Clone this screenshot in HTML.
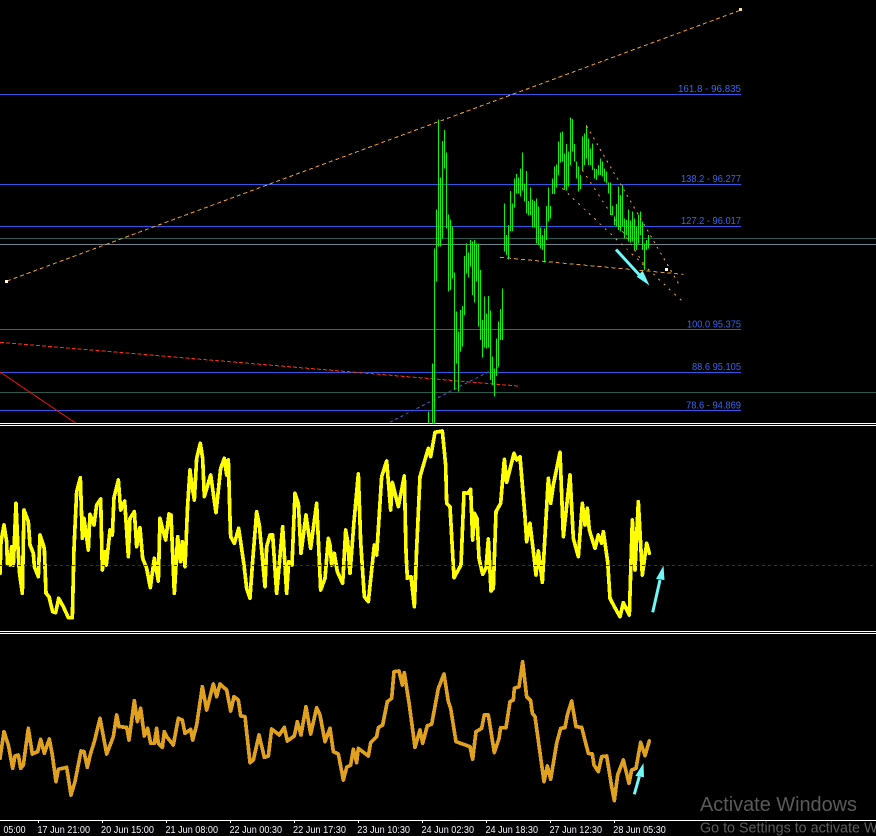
<!DOCTYPE html>
<html><head><meta charset="utf-8"><style>
html,body{margin:0;padding:0;background:#000;width:876px;height:836px;overflow:hidden}
svg{display:block}
text{font-family:"Liberation Sans",sans-serif}
</style></head><body>
<svg width="876" height="836" viewBox="0 0 876 836" xmlns="http://www.w3.org/2000/svg">
<rect width="876" height="836" fill="#000"/>
<defs><clipPath id="m"><rect x="0" y="0" width="876" height="423"/></clipPath></defs>
<g clip-path="url(#m)">
<g shape-rendering="crispEdges" fill="#3058e8">
<rect x="0" y="94" width="741" height="1"/><rect x="0" y="184" width="741" height="1"/><rect x="0" y="226" width="741" height="1"/><rect x="0" y="329" width="741" height="1"/><rect x="0" y="372" width="741" height="1"/><rect x="0" y="410" width="741" height="1"/>
<rect x="0" y="238" width="876" height="1" fill="#2a5a58"/><rect x="0" y="244" width="876" height="1" fill="#74848c"/><rect x="0" y="392" width="876" height="1" fill="#2a5a50"/>
</g>
<g fill="none" stroke-width="1" shape-rendering="crispEdges">
<path d="M7 281L741 10" stroke="#f0a020" stroke-dasharray="4 3"/>
<path d="M0 342.4L518 386" stroke="#ff3300" stroke-dasharray="4 2"/>
<path d="M0 372L77 424" stroke="#f01010"/>
<path d="M384.6 425L499 366.5" stroke="#4060d0" stroke-dasharray="3 3"/>
</g>
<path fill="none" stroke="#00f800" stroke-width="3" shape-rendering="crispEdges" transform="translate(420.17,100) scale(.33333)" d="M25 935V970M37 790V970M43 445V970M49 328V545M55 58V440M61 232V440M67 123V415M73 90V205M79 157V385M85 343V575M91 358V570M97 380V535M103 517V870M109 635V790M115 695V875M121 630V755M127 618V740M133 468V645M139 430V520M145 457V533M151 420V500M157 425V585M163 420V608M169 430V545M175 430V680M181 510V720M187 660V773M193 590V743M199 640V745M205 588V743M211 632V840M217 770V855M223 805V890M229 715V828M235 665V800M241 627V720M247 565V720M253 310V455M259 405V465M265 375V478M271 273V393M277 310V393M283 235V323M289 222V280M295 232V280M301 205V290M307 157V272M313 250V305M319 213V340M325 303V347M331 262V345M337 298V383M343 303V383M349 295V430M355 320V435M361 383V445M367 405V450M373 385V487M379 318V420M385 262V365M391 318V355M397 235V282M403 200V282M409 193V262M415 125V225M421 98V187M427 95V185M433 160V270M439 132V272M445 155V260M451 52V195M457 57V155M463 132V185M469 185V235M475 200V275M481 225V267M487 110V210M493 100V195M499 75V175M505 115V195M511 145V195M517 130V210M523 205V235M529 207V240M535 195V225M541 175V225M547 185V230M553 205V245M559 215V250M565 247V280M571 247V345M577 318V345M583 350V375M589 312V380M595 260V390M601 285V395M607 255V380M613 355V415M619 360V405M625 328V425M631 362V428M637 335V425M643 355V450M649 380V450M655 343V430M661 335V405M667 365V450M673 430V510M679 420V450M685 405V445"/>
<g fill="none" stroke="#e8a020" stroke-width="1" shape-rendering="crispEdges" transform="translate(420,100) scale(.33333)">
<path d="M240 472L790 523" stroke-width="3" stroke-dasharray="12 9"/>
<path d="M500 78L775 550" stroke-width="3" stroke-dasharray="6 14"/>
<path d="M427 265L790 607" stroke-width="3" stroke-dasharray="6 16"/>
<path d="M487 210L680 505" stroke-width="3" stroke-dasharray="6 16"/>
</g>
<rect x="665" y="268" width="3" height="3" fill="#fff" shape-rendering="crispEdges"/>
<rect x="5" y="280" width="3" height="3" fill="#fff" shape-rendering="crispEdges"/>
<rect x="739" y="8" width="3" height="3" fill="#f8e0a0" shape-rendering="crispEdges"/>
<path d="M616 249.5L644 280" stroke="#70f8f8" stroke-width="3" fill="none"/>
<path d="M649.5 285.5L636.7 276.7L642.7 270.7Z" fill="#70f8f8"/>
</g>
<g font-size="10.5" fill="#3a66f0">
<text x="678" y="92" textLength="63" lengthAdjust="spacingAndGlyphs">161.8 -  96.835</text>
<text x="681" y="182" textLength="60" lengthAdjust="spacingAndGlyphs">138.2 - 96.277</text>
<text x="681" y="224" textLength="60" lengthAdjust="spacingAndGlyphs">127.2 - 96.017</text>
<text x="687" y="327.5" textLength="54" lengthAdjust="spacingAndGlyphs">100.0 95.375</text>
<text x="692" y="370" textLength="49" lengthAdjust="spacingAndGlyphs">88.6 95.105</text>
<text x="686" y="408.5" textLength="55" lengthAdjust="spacingAndGlyphs">78.6 - 94.869</text>
</g>
<rect x="0" y="423" width="876" height="1" fill="#fff" shape-rendering="crispEdges"/>
<rect x="0" y="425" width="876" height="1" fill="#fff" shape-rendering="crispEdges"/>
<rect x="0" y="631" width="876" height="1" fill="#fff" shape-rendering="crispEdges"/>
<rect x="0" y="633" width="876" height="1" fill="#fff" shape-rendering="crispEdges"/>

<g fill="none" stroke="#ffff00" stroke-width="11" stroke-linejoin="round" stroke-linecap="round" shape-rendering="crispEdges">
<polyline transform="translate(0,425) scale(.33333)" points="0,445 3,350 12,300 20,350 22,415 30,420 35,365 40,420 48,235 53,350 58,440 67,505 72,255 85,290 90,360 100,385 103,425 115,455 120,330 133,370 138,505 147,515 158,560 167,563 176,520 190,545 205,578 217,578 222,370 230,200 241,158 247,340 252,280 265,375 270,268 282,300 290,240 302,222 307,435 314,380 319,420 330,315 337,330 342,218 355,165 362,255 374,228 385,395 390,280 403,260 410,365 420,308 428,400 440,430 451,488 463,400 475,468 480,280 490,320 497,345 507,267 513,270 523,505 533,335 541,410 547,350 555,425 563,240 570,135 575,175 583,225 590,100 601,55 608,100 613,215 632,150 648,263 662,130 673,100 680,150 685,105 690,280 692,335 703,355 716,310 722,350 732,420 740,490 750,520 757,420 770,260 778,300 795,485 800,365 810,330 818,330 830,505 848,305 860,505 866,410 876,420 885,205 895,235 903,385 918,270 932,370 950,235 962,495 975,460 985,340 990,360"/>
<polyline transform="translate(330,425) scale(.33333)" points="0,360 5,420 13,385 22,440 38,475 47,315 53,350 60,445 72,290 85,147 92,350 103,515 115,530 133,360 140,390 155,155 170,108 182,255 187,172 205,245 223,153 228,380 232,460 243,455 253,545 260,370 270,155 295,70 302,95 315,22 337,18 347,120 350,235 360,245 372,458 393,420 402,203 413,205 422,193 428,345 433,265 441,280 447,400 458,448 468,430 475,342 483,498 490,490 498,260 512,235 523,103 530,172 552,85 560,105 570,95 585,275 590,350 600,295 612,395 618,450 625,378 637,472 655,160 662,235 670,180 690,82 700,335 720,150 730,340 745,395 757,235 765,300 772,250 778,315 795,370 805,330 815,355 820,320 833,410 840,520 853,545 870,575 880,533 898,570 907,285 915,435 925,230 937,450 950,355 958,385"/>
</g>
<path d="M0 565.5H876" stroke="#800080" stroke-width="1" stroke-dasharray="3 3" shape-rendering="crispEdges"/>
<path d="M652.7 612.3L660 580" stroke="#70f8f8" stroke-width="3" fill="none"/>
<path d="M663.5 565.5L656 579L664.5 580Z" fill="#70f8f8"/>

<g fill="none" stroke="#e0a020" stroke-width="11" stroke-linejoin="round" stroke-linecap="round" shape-rendering="crispEdges">
<polyline transform="translate(0,630) scale(.33333)" points="0,385 12,305 25,345 38,415 45,378 55,375 62,415 70,405 85,295 97,372 113,365 122,328 133,370 148,327 157,375 168,455 175,418 200,412 213,495 225,455 243,363 252,365 262,412 272,370 283,335 300,265 320,372 340,320 350,255 357,290 380,292 387,330 403,212 412,275 422,235 433,318 443,295 452,340 463,340 470,295 475,340 487,352 493,305 500,320 520,345 535,265 547,270 555,310 572,298 578,330 590,285 607,170 620,240 640,162 650,200 660,162 680,180 692,243 702,200 715,210 722,258 735,260 750,398 760,390 777,315 793,382 805,378 815,297 838,315 853,292 862,333 883,318 892,275 903,315 918,230 932,312 950,233 960,255 975,335 990,295"/>
<polyline transform="translate(330,630) scale(.33333)" points="0,295 10,365 25,372 40,450 50,412 62,405 70,358 80,398 85,355 115,378 122,338 140,320 145,293 158,285 172,215 185,205 192,125 207,123 217,165 223,128 238,225 255,352 270,300 278,340 292,287 305,283 325,175 342,132 355,215 362,235 378,335 420,350 428,388 438,305 455,295 463,255 475,255 493,368 507,325 512,293 528,293 540,215 550,210 553,175 567,170 578,95 590,200 602,212 607,250 615,260 642,455 652,408 662,448 680,340 692,295 705,293 712,255 725,213 738,290 755,292 775,370 787,372 792,405 805,425 815,380 830,378 845,470 853,512 863,435 880,390 897,460 905,420 918,415 932,337 945,377 958,333"/>
</g>
<path d="M634.3 794.3L639.3 776.7" stroke="#70f8f8" stroke-width="3" fill="none"/>
<path d="M643.5 763L635.3 776L644 777.3Z" fill="#70f8f8"/>

<text x="700" y="811" font-size="20" fill="#5a5a5a" textLength="157" lengthAdjust="spacingAndGlyphs">Activate Windows</text>
<text x="700" y="832.7" font-size="14.5" fill="#5e5e5e" textLength="226" lengthAdjust="spacingAndGlyphs">Go to Settings to activate Windows.</text>
<rect x="0" y="820" width="876" height="1" fill="#fff" shape-rendering="crispEdges"/>
<path d="M38.5 821V823M102.5 821V823M166.5 821V823M230.5 821V823M294.5 821V823M358.5 821V823M422.5 821V823M486.5 821V823M550.5 821V823M614.5 821V823" stroke="#fff" stroke-width="1" shape-rendering="crispEdges"/>
<g font-size="10.5" fill="#f4f8ff">
<text x="3.5" y="833" textLength="22" lengthAdjust="spacingAndGlyphs">05:00</text>
<text x="37.5" y="833" textLength="52.5" lengthAdjust="spacingAndGlyphs">17 Jun 21:00</text>
<text x="101" y="833" textLength="53" lengthAdjust="spacingAndGlyphs">20 Jun 15:00</text>
<text x="165.5" y="833" textLength="52.5" lengthAdjust="spacingAndGlyphs">21 Jun 08:00</text>
<text x="229.5" y="833" textLength="52.5" lengthAdjust="spacingAndGlyphs">22 Jun 00:30</text>
<text x="293" y="833" textLength="53" lengthAdjust="spacingAndGlyphs">22 Jun 17:30</text>
<text x="357.3" y="833" textLength="52.7" lengthAdjust="spacingAndGlyphs">23 Jun 10:30</text>
<text x="421.5" y="833" textLength="52.5" lengthAdjust="spacingAndGlyphs">24 Jun 02:30</text>
<text x="485.5" y="833" textLength="52.5" lengthAdjust="spacingAndGlyphs">24 Jun 18:30</text>
<text x="549.5" y="833" textLength="52.5" lengthAdjust="spacingAndGlyphs">27 Jun 12:30</text>
<text x="613.3" y="833" textLength="52.5" lengthAdjust="spacingAndGlyphs">28 Jun 05:30</text>
</g>
</svg>
</body></html>
